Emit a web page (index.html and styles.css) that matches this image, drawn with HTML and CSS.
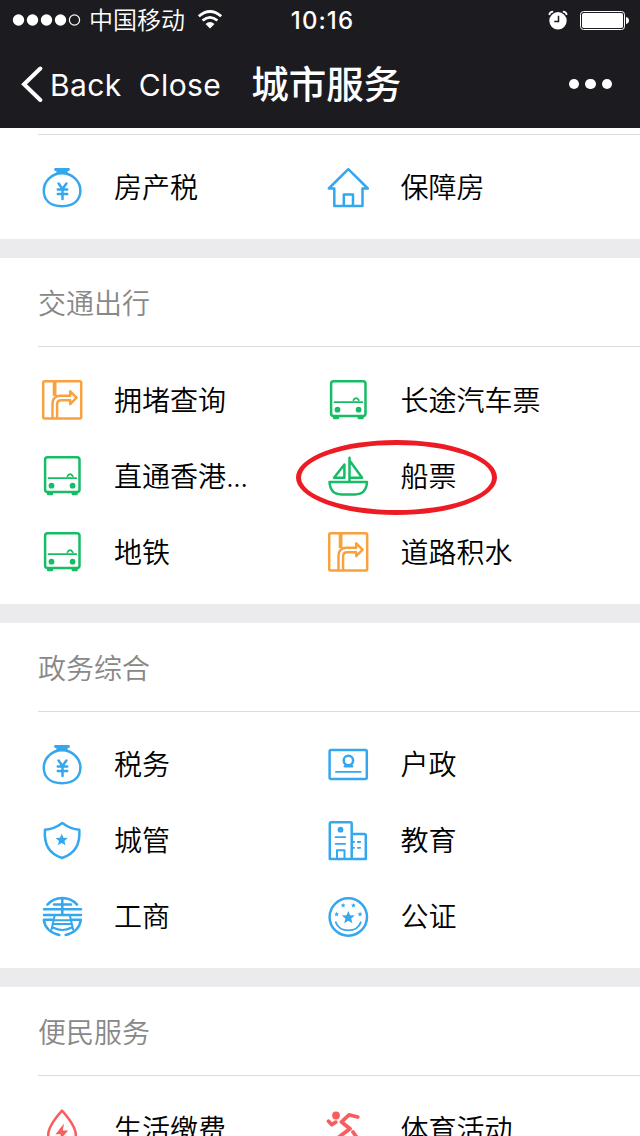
FILE: index.html
```html
<!DOCTYPE html>
<html lang="zh-CN">
<head>
    <meta charset="UTF-8">
    <meta name="viewport" content="width=device-width, initial-scale=1.0">
    <title>城市服务</title>
    <link rel="stylesheet" href="styles.css">
</head>
<body>
    <!-- Icon set -->
    <svg class="icon-defs" width="0" height="0">
        <symbol id="purse" viewBox="0 0 40 40">
            <path d="M13.5 1.5h13M15.5 4.300h9" stroke-width="2.800"/>
            <path d="M20 5.200C10 5.200 1.800 13 1.800 22.500S8 38.200 20 38.200 38.400 32 38.400 22.500 30 5.200 20 5.200z"/>
            <path d="M16.600 15.500l3.900 5.500 3.900-5.500M15.800 21.600h9.400M15.800 26h9.400M20.500 21v10"/>
        </symbol>
        <symbol id="house" viewBox="0 0 40 40">
            <path d="M6.300 20.500H.8L20.300 1.200l19.500 19.300H34.500M6.300 20.500V38h28.200V20.500M15.800 38V26.500h9.200V38"/>
        </symbol>
        <symbol id="road" viewBox="0 0 40 40">
            <rect x="1.200" y="1.200" width="38" height="37.400" rx="1.500"/>
            <path d="M12.600 2v14" stroke-width="3.800" stroke-linecap="butt"/>
            <path d="M10.500 38V24q0-8.300 8-8.300h9.700v-4.400l6.400 6.400-6.400 6.400v-3.900H19.300q-4.200 0-4.200 4V38"/>
        </symbol>
        <symbol id="bus" viewBox="0 0 40 40">
            <rect x="3.100" y="1.200" width="34.400" height="34.900" rx="2.500"/>
            <path d="M6.500 22.200h27.800M25.400 20.200q2.700-4 5.400 0" stroke-width="1.700"/>
            <circle class="solid" cx="9.500" cy="29.700" r="2.900"/>
            <circle class="solid" cx="30.600" cy="29.700" r="2.900"/>
            <path d="M6.300 37.700h3.400M31 37.700h3.400" stroke-width="3"/>
        </symbol>
        <symbol id="boat" viewBox="0 0 40 40">
            <path d="M1.500 26h37.500q-.8 12.400-12 12.400h-13.500Q2.300 38.400 1.500 26zM21.500 1.800V26M22.300 5.500l11.800 16.200H21.500M16.400 8.500v13.200H6z"/>
        </symbol>
        <symbol id="card" viewBox="0 0 40 40">
            <rect x="1.600" y="5" width="37.200" height="29" rx="1.500"/>
            <circle cx="20.400" cy="15.500" r="4.700"/>
            <path d="M17 21.200h7" stroke-width="2.600"/>
            <path d="M7.800 26.800h25" stroke-width="1.700"/>
        </symbol>
        <symbol id="shield" viewBox="0 0 40 40">
            <path d="M20.300 2q8.500 6.300 17 6.700Q39 31 20 37 1 31 3 8.700 11.800 8.300 20.300 2z"/>
            <path class="solid" d="M19.700 12.700l1.700 4.100 4.400.3-3.400 2.900 1.100 4.300-3.800-2.400-3.800 2.400 1.100-4.300-3.400-2.900 4.400-.3z"/>
        </symbol>
        <symbol id="school" viewBox="0 0 40 40">
            <path d="M1.800 37.900V2.800q0-1.500 1.500-1.500h18.900q1.500 0 1.500 1.500v35.100zM24 13h12.300q1.500 0 1.500 1.500v23.400H24"/>
            <path d="M9 37V29.200h7.500V37" stroke-width="2"/>
            <path d="M7.600 16.200h9.600M7.600 22.800h9.600M24.800 21h1.300M29.800 21h2.400M24.800 26.800h1.300M29.800 26.800h2.400" stroke-width="1.800"/>
            <circle class="solid" cx="12.500" cy="8.700" r="2.900"/>
        </symbol>
        <symbol id="commerce" viewBox="0 0 40 40">
            <path d="M5.500 7.600Q11.500 1.100 20.300 1.100T35 7.600M12 7.600h17M2 12.300h37M2 17.900h37M20.300 1v17"/>
            <path d="M1.800 22.800h9M38.800 22.800h-9M1.800 22.800Q3.300 34.500 17.300 38M38.800 22.800Q37.300 34.500 23.700 38"/>
            <path d="M12.600 19L9.500 32.500M28 19l3.100 13.500M13 23.200h14.500M12 27h17M11 30.500q9.300 5 18.600 0" stroke-width="2"/>
        </symbol>
        <symbol id="seal" viewBox="0 0 40 40">
            <circle cx="20.300" cy="20" r="18.700"/>
            <path d="M7.800 25.300C11 36 29.600 36 32.800 25.300" stroke-width="1.900"/>
            <path class="solid" d="M20.300 13.900l1.800 4.300 4.700.4-3.600 3 1.200 4.600-4.100-2.500-4.100 2.500 1.200-4.600-3.600-3 4.700-.4z"/>
            <path class="solid" d="M15.200 5.900l.7 1.500 1.600.2-1.200 1.100.3 1.700-1.400-.8-1.500.8.300-1.700-1.200-1.100 1.700-.2zM25.500 5.900l.7 1.500 1.600.2-1.200 1.100.3 1.700-1.400-.8-1.500.8.300-1.700-1.200-1.100 1.700-.2zM8.700 14.700l.7 1.500 1.600.2-1.200 1.100.3 1.700-1.400-.8-1.500.8.300-1.700-1.200-1.100 1.700-.2zM32.100 14.700l.7 1.500 1.600.2-1.200 1.100.3 1.700-1.400-.8-1.500.8.300-1.700-1.200-1.100 1.700-.2z"/>
        </symbol>
        <symbol id="drop" viewBox="0 0 40 40">
            <path d="M20 1.600Q6.200 17 6.200 26a13.800 13 0 0 0 27.600 0Q33.800 17 20 1.600z"/>
            <path class="solid" d="M22 14.500L13.500 25.300h5.300l-1.500 6 9-9.800h-5.500z"/>
        </symbol>
        <symbol id="runner" viewBox="0 0 40 40">
            <circle class="solid" cx="8" cy="6.500" r="3.900"/>
            <path d="M.6 12.200l3.200 3.500 4-2.500M29.700 8L21 5.900l-7.500 7 8.500 6.800-8.500 6.300M25 23l3.500 5v6M13 26.500L6 32" stroke-width="3.800"/>
        </symbol>
    </svg>

    <header class="header">
        <div class="status-bar">
            <div class="carrier">
                <svg class="signal" width="68" height="12" viewBox="0 0 68 12">
                    <circle cx="5.500" cy="6" r="5.700"/>
                    <circle cx="19.500" cy="6" r="5.700"/>
                    <circle cx="33.500" cy="6" r="5.700"/>
                    <circle cx="47.500" cy="6" r="5.700"/>
                    <circle class="empty" cx="61.500" cy="6" r="5.100"/>
                </svg>
                <span class="carrier-name">中国移动</span>
                <svg class="wifi" width="26" height="20" viewBox="0 0 26 20">
                    <path d="M1.800 6.300Q13-3.200 24.200 6.300M5.600 10.500Q13 4.200 20.400 10.500"/>
                    <path class="wifi-dot" d="M8.500 14Q13 10 17.500 14L13 18.600z"/>
                </svg>
            </div>
            <div class="time">10:16</div>
            <div class="status-right">
                <svg width="20" height="20" viewBox="0 0 20 20">
                    <circle cx="10" cy="10.800" r="8.700" fill="#fff"/>
                    <path d="M1.300 5Q1.800 1.600 5.200 1.600M18.700 5Q18.200 1.600 14.800 1.600" fill="none" stroke="#fff" stroke-width="1.800"/>
                    <path d="M10.500 5.800v5.700H6.300" fill="none" stroke="#1c1b20" stroke-width="1.500"/>
                </svg>
                <svg width="49" height="20" viewBox="0 0 49 20">
                    <rect x=".5" y="1.500" width="44" height="18" rx="3" fill="none" stroke="#fff"/>
                    <rect x="2" y="3" width="41" height="15" rx="1.800" fill="#fff"/>
                    <path d="M46 7q3 .7 3 3.500t-3 3.500z" fill="#fff"/>
                </svg>
            </div>
        </div>
        <nav class="nav-bar">
            <svg class="back-arrow" width="22" height="36" viewBox="0 0 22 36">
                <path d="M19.300 2.500L3 18.300l16.300 15.700"/>
            </svg>
            <span class="nav-back">Back</span>
            <span class="nav-close">Close</span>
            <h1>城市服务</h1>
            <div class="more"><i></i><i></i><i></i></div>
        </nav>
    </header>

    <main class="content">
        <section class="section">
            <div class="services">
                <div class="service blue"><svg class="icon"><use href="#purse"/></svg><span>房产税</span></div>
                <div class="service blue"><svg class="icon"><use href="#house"/></svg><span>保障房</span></div>
            </div>
        </section>

        <section class="section">
            <h2>交通出行</h2>
            <div class="services">
                <div class="service orange"><svg class="icon"><use href="#road"/></svg><span>拥堵查询</span></div>
                <div class="service green"><svg class="icon"><use href="#bus"/></svg><span>长途汽车票</span></div>
                <div class="service green"><svg class="icon"><use href="#bus"/></svg><span>直通香港<span class="dots">...</span></span></div>
                <div class="service green">
                    <svg class="icon"><use href="#boat"/></svg><span>船票</span>
                    <div class="highlight"></div>
                </div>
                <div class="service green"><svg class="icon"><use href="#bus"/></svg><span>地铁</span></div>
                <div class="service orange"><svg class="icon"><use href="#road"/></svg><span>道路积水</span></div>
            </div>
        </section>

        <section class="section">
            <h2>政务综合</h2>
            <div class="services">
                <div class="service blue"><svg class="icon"><use href="#purse"/></svg><span>税务</span></div>
                <div class="service blue"><svg class="icon"><use href="#card"/></svg><span>户政</span></div>
                <div class="service blue"><svg class="icon"><use href="#shield"/></svg><span>城管</span></div>
                <div class="service blue"><svg class="icon"><use href="#school"/></svg><span>教育</span></div>
                <div class="service blue"><svg class="icon"><use href="#commerce"/></svg><span>工商</span></div>
                <div class="service blue"><svg class="icon"><use href="#seal"/></svg><span>公证</span></div>
            </div>
        </section>

        <section class="section">
            <h2>便民服务</h2>
            <div class="services">
                <div class="service red"><svg class="icon"><use href="#drop"/></svg><span>生活缴费</span></div>
                <div class="service red"><svg class="icon"><use href="#runner"/></svg><span>体育活动</span></div>
            </div>
        </section>
    </main>
</body>
</html>
```

FILE: styles.css
```css
* {
    margin: 0;
    padding: 0;
    box-sizing: border-box;
}

body {
    width: 640px;
    height: 1136px;
    overflow: hidden;
    display: flex;
    flex-direction: column;
    font-family: Inter, "Noto Sans CJK SC", sans-serif;
    background: #ebebed;
    color: #000;
}

.icon-defs {
    position: absolute;
}

/* Header */
.header {
    flex: none;
    height: 128px;
    background: #1c1b20;
    color: #fff;
}

.status-bar {
    height: 40px;
    display: grid;
    grid-template-columns: 1fr auto 1fr;
    align-items: center;
    padding: 0 11px 0 13px;
}

.carrier {
    display: flex;
    align-items: center;
}

.signal {
    fill: #fff;
    overflow: visible;
}

.signal .empty {
    fill: none;
    stroke: #fff;
    stroke-width: 1.2;
}

.carrier-name {
    margin-left: 8px;
    padding-top: 2px;
    font-size: 24px;
    line-height: 38px;
    font-weight: 350;
}

.wifi {
    margin-left: 12px;
    fill: none;
    stroke: #fff;
    stroke-width: 2.8;
}

.wifi .wifi-dot {
    fill: #fff;
    stroke: none;
}

.time {
    padding: 1px 0 0 3px;
    font-size: 24px;
    font-weight: 500;
    letter-spacing: 1.1px;
}

.status-right {
    display: flex;
    justify-content: flex-end;
    gap: 12px;
}

.nav-bar {
    height: 88px;
    display: flex;
    align-items: center;
    padding: 0 28px 0 21px;
}

.back-arrow {
    fill: none;
    stroke: #fff;
    stroke-width: 4;
    stroke-linecap: round;
}

.nav-back,
.nav-close {
    padding-top: 2px;
    font-size: 30px;
    letter-spacing: 0.4px;
}

.nav-back {
    margin-left: 7px;
}

.nav-close {
    margin-left: 17px;
}

.nav-bar h1 {
    margin-left: 30px;
    padding-bottom: 5px;
    font-size: 37.5px;
    font-weight: 500;
}

.more {
    display: flex;
    gap: 6px;
    margin-left: auto;
}

.more i {
    width: 10.5px;
    height: 10.5px;
    border-radius: 50%;
    background: #fff;
}

/* Service sections */
.content {
    display: flex;
    flex-direction: column;
    gap: 19px;
}

.section {
    padding-left: 38px;
    background: #fff;
}

.section:first-child {
    padding-top: 5.5px;
}

.section h2 {
    height: 88px;
    line-height: 92px;
    font-size: 28px;
    font-weight: 350;
    color: #888;
}

.services {
    display: grid;
    grid-template-columns: 286.5px 1fr;
    grid-auto-rows: 76px;
    padding: 15px 0 13.5px 3.6px;
    border-top: 1px solid #dcdcdc;
}

.service {
    position: relative;
    display: flex;
    align-items: center;
    gap: 32.4px;
    font-size: 28px;
    line-height: 40px;
    white-space: nowrap;
}

.icon {
    width: 40px;
    height: 40px;
    overflow: visible;
    fill: none;
    stroke: currentColor;
    stroke-width: 2.5;
    stroke-linejoin: round;
    stroke-linecap: round;
}

.icon-defs symbol {
    overflow: visible;
}

.solid {
    fill: currentColor;
    stroke: none;
}

.service span {
    padding-top: 1px;
    font-weight: 350;
    color: #000;
}

.service .dots {
    letter-spacing: -0.8px;
}

.blue {
    color: #34a7ee;
}

.green {
    color: #18bb66;
}

.orange {
    color: #f7a23f;
}

.red {
    color: #f95e5e;
}

.highlight {
    position: absolute;
    left: -32.6px;
    top: 2px;
    width: 201px;
    height: 75px;
    border: 5px solid #ed1c24;
    border-radius: 50%;
}
```
